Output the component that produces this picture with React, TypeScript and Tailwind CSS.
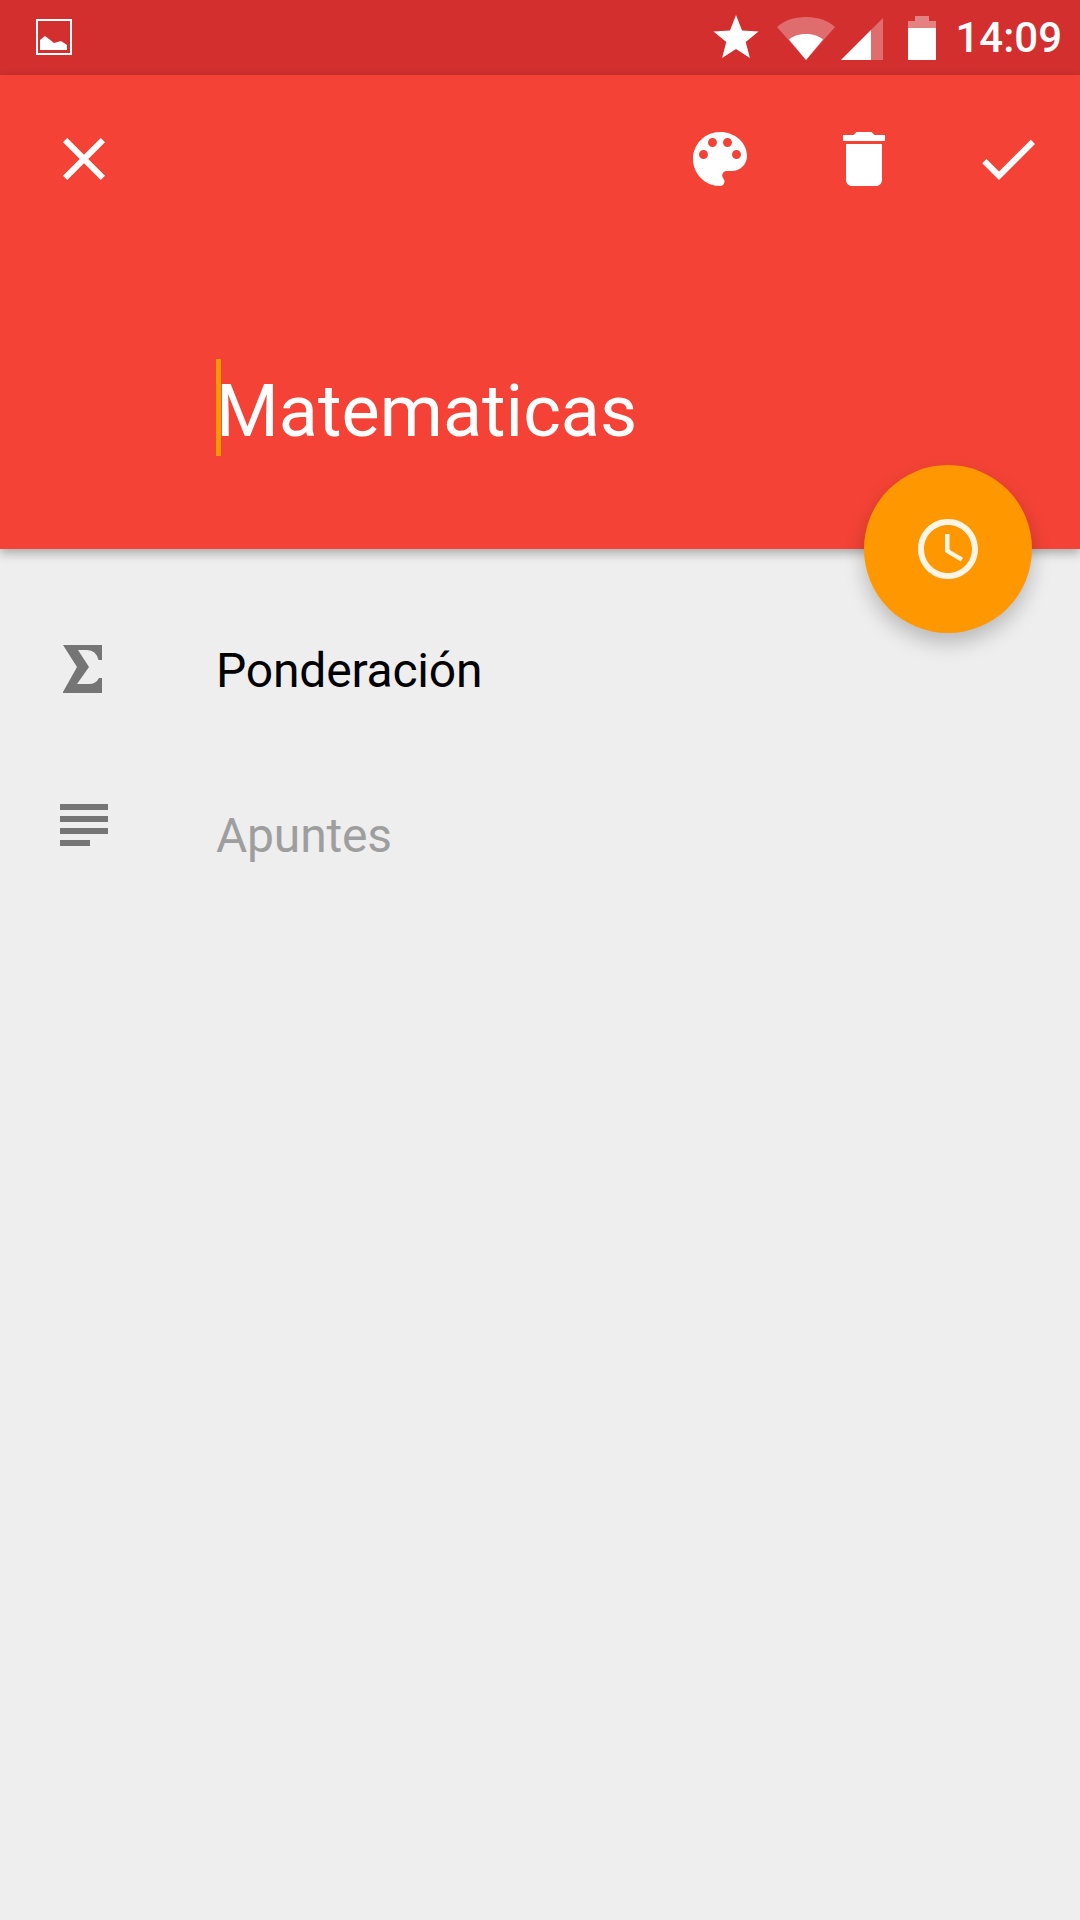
const roboto = "font-['Roboto',sans-serif]";

const Icon = ({ d }: { d: string }) => (
    <svg viewBox="0 0 24 24" className="w-[72px] h-[72px] fill-white">
        <path d={d} />
    </svg>
);

const StatusBar = () => (
    <div className="h-[75px] bg-[#d32f2f] flex items-center pl-[36px] pr-[18px]">
        <svg viewBox="0 0 36 36" className="w-[36px] h-[36px] mb-[1px]">
            <rect x="1" y="1" width="34" height="34" fill="none" stroke="#fff" strokeWidth="2" />
            <path d="M4 31V21l5-4 4 3 5 4 7-2 6 4v5z" fill="#fff" />
        </svg>
        <div className="flex-1" />
        <svg viewBox="0 0 46 44" className="w-[46px] h-[44px] mb-[2px]">
            <path d="M23 0l6 15.500 16.500 1-12.800 10.500 4.200 16L23 34l-13.900 9 4.200-16L.5 16.500l16.500-1z" fill="#fff" />
        </svg>
        <svg viewBox="0 0 60 44" className="w-[60px] h-[44px] ml-[17px]">
            <path d="M1 11C8 4.500 18 1 30 1s22 3.500 29 10L30 44z" fill="#fff" fillOpacity=".3" />
            <path d="M13 23.500C18 19.500 23.500 18 30 18s12 1.500 17 5.500L30 44z" fill="#fff" />
        </svg>
        <svg viewBox="0 0 44 44" className="w-[44px] h-[44px] ml-[4px]">
            <path d="M1 44L43 2v42z" fill="#fff" fillOpacity=".3" />
            <path d="M1 44l30-30v30z" fill="#fff" />
        </svg>
        <svg viewBox="0 0 28 44" className="w-[28px] h-[44px] ml-[24px]">
            <path d="M7 0h14v5h7v7H0V5h7z" fill="#fff" fillOpacity=".4" />
            <path d="M0 12h28v32H0z" fill="#fff" />
        </svg>
        <span className="font-medium text-[42px] leading-none text-white ml-[19px]">14:09</span>
    </div>
);

const actions = [
    'M12 3c-4.97 0-9 4.03-9 9s4.03 9 9 9c.83 0 1.5-.67 1.5-1.5 0-.39-.15-.74-.39-1.01-.23-.26-.38-.61-.38-.99 0-.83.67-1.5 1.5-1.5H16c2.76 0 5-2.24 5-5 0-4.42-4.03-8-9-8zm-5.5 9c-.83 0-1.5-.67-1.5-1.5S5.67 9 6.5 9 8 9.67 8 10.5 7.33 12 6.5 12zm3-4C8.67 8 8 7.33 8 6.5S8.67 5 9.5 5s1.5.67 1.5 1.5S10.33 8 9.5 8zm5 0c-.83 0-1.5-.67-1.5-1.5S13.67 5 14.5 5s1.5.67 1.5 1.5S15.33 8 14.5 8zm3 4c-.83 0-1.5-.67-1.5-1.5S16.67 9 17.5 9s1.5.67 1.5 1.5-.67 1.5-1.5 1.5z',
    'M6 19c0 1.1.9 2 2 2h8c1.1 0 2-.9 2-2V7H6v12zM19 4h-3.5l-1-1h-5l-1 1H5v2h14V4z',
    'M9 16.17L4.83 12l-1.41 1.41L9 19 21 7l-1.41-1.41z',
];

const Toolbar = () => (
    <div className="h-[168px] flex items-center">
        <div className="w-[168px] flex justify-center">
            <Icon d="M19 6.41L17.59 5 12 10.59 6.41 5 5 6.41 10.59 12 5 17.59 6.41 19 12 13.41 17.59 19 19 17.59 13.41 12z" />
        </div>
        <div className="flex-1" />
        {actions.map((d) => (
            <div key={d} className="w-[144px] flex justify-center">
                <Icon d={d} />
            </div>
        ))}
    </div>
);

export default function App() {
    return (
        <div className={`${roboto} relative w-[1080px] h-[1920px] bg-[#eeeeee] overflow-hidden`}>
            <StatusBar />
            <div className="relative h-[474px] bg-[#f44336] shadow-[0_4px_10px_rgba(0,0,0,0.3)]">
                <Toolbar />
                <div className="flex items-start pl-[216px] pt-[116px]">
                    <span className="w-[5px] h-[97px] bg-[#ff9800] mr-[-5px]" />
                    <span className="text-[72px] leading-[97px] text-white mt-[4px]">Matematicas</span>
                </div>
                <button className="absolute left-[864px] top-[390px] w-[168px] h-[168px] rounded-full bg-[#ff9800] flex items-center justify-center shadow-[0_10px_20px_rgba(0,0,0,0.22)]">
                    <svg viewBox="0 0 24 24" className="w-[72px] h-[72px] fill-white/90">
                        <path d="M11.99 2C6.47 2 2 6.48 2 12s4.47 10 9.99 10C17.52 22 22 17.52 22 12S17.52 2 11.99 2zM12 20c-4.42 0-8-3.58-8-8s3.58-8 8-8 8 3.58 8 8-3.58 8-8 8z" />
                        <path d="M12.5 7H11v6l5.25 3.15.75-1.23-4.5-2.67z" />
                    </svg>
                </button>
            </div>
            <div className="flex items-center h-[72px] mt-[84px]">
                <div className="w-[216px] pl-[63px]">
                    <svg viewBox="0 0 39 48" className="w-[39px] h-[48px] fill-[#757575]">
                        <path d="M0 0h39v15h-3.500Q33 5 24 5H15l11 17-12 17h12q7 0 10-6h3v15H0v-1l14-25L0 0z" />
                    </svg>
                </div>
                <span className="text-[48px] leading-[72px] tracking-[-0.2px] text-black mt-[4px]">Ponderación</span>
            </div>
            <div className="flex items-start mt-[95px]">
                <div className="w-[216px] pl-[60px] pt-[4px] flex flex-col gap-[6px]">
                    <div className="w-[48px] h-[6px] bg-[#757575]" />
                    <div className="w-[48px] h-[6px] bg-[#757575]" />
                    <div className="w-[48px] h-[6px] bg-[#757575]" />
                    <div className="w-[30px] h-[6px] bg-[#757575]" />
                </div>
                <span className="text-[48px] leading-[72px] tracking-[-0.2px] text-[#9e9e9e]">Apuntes</span>
            </div>
        </div>
    );
}
